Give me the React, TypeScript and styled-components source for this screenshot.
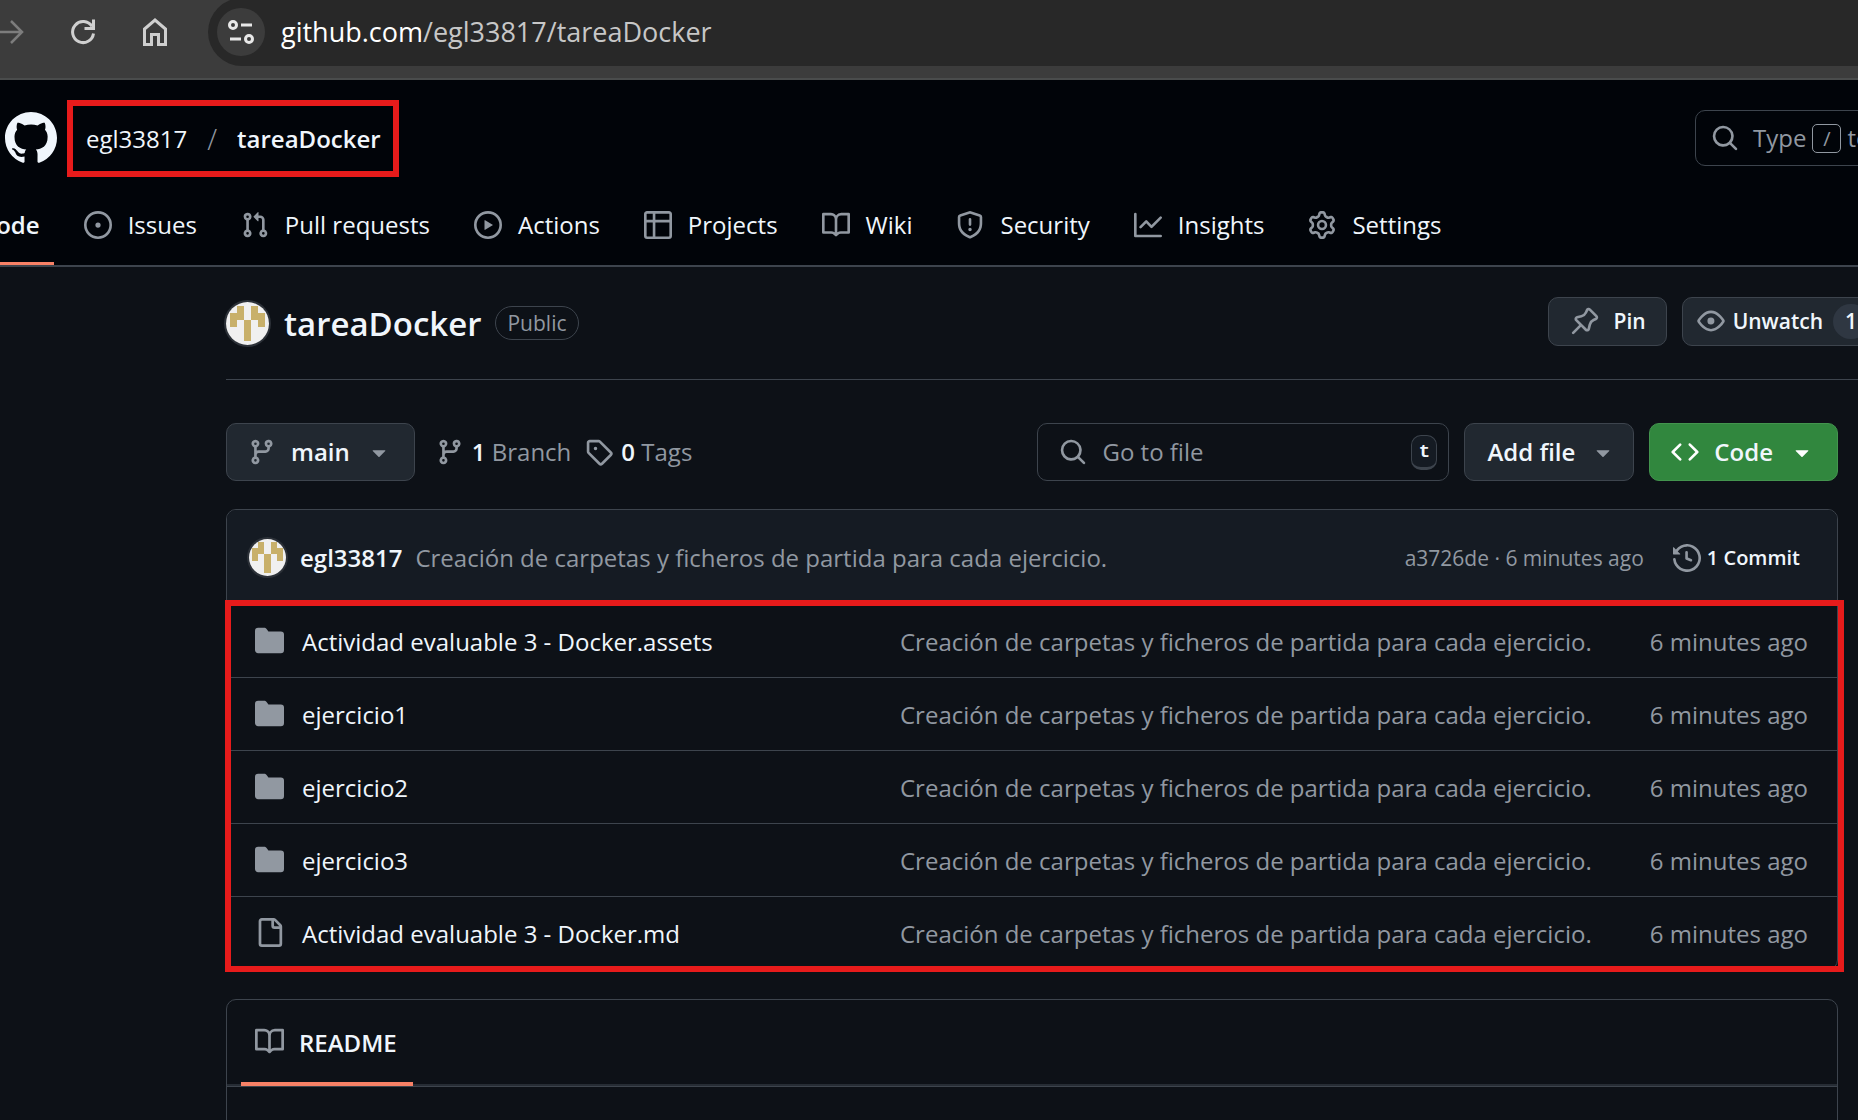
import React from "react";
import styled, { createGlobalStyle } from "styled-components";

const c = {
  canvas: "#0d1117",
  header: "#010409",
  subtle: "#151b23",
  button: "#212830",
  border: "#3d444d",
  text: "#f0f6fc",
  muted: "#9198a1",
  accent: "#f78166",
  mark: "#e71b1b",
};

const GlobalStyle = createGlobalStyle`
  *, *::before, *::after { box-sizing: border-box; }
  html, body { margin: 0; background: ${c.canvas}; }
  body, button, input {
    font-family: "Segoe UI", "Open Sans", "Noto Sans", sans-serif;
    font-size: 24px;
    line-height: 32px;
    color: ${c.text};
  }
  a { color: inherit; text-decoration: none; }
  svg { display: block; flex: none; }
`;

const paths = {
  github:
    "M8 0c4.42 0 8 3.58 8 8a8.013 8.013 0 0 1-5.45 7.59c-.4.08-.55-.17-.55-.38 0-.27.01-1.13.01-2.2 0-.75-.25-1.23-.54-1.48 1.78-.2 3.65-.88 3.65-3.95 0-.88-.31-1.59-.82-2.15.08-.2.36-1.02-.08-2.12 0 0-.67-.22-2.2.82-.64-.18-1.32-.27-2-.27-.68 0-1.36.09-2 .27-1.53-1.03-2.2-.82-2.2-.82-.44 1.1-.16 1.92-.08 2.12-.51.56-.82 1.28-.82 2.15 0 3.06 1.86 3.75 3.64 3.95-.23.2-.44.55-.51 1.07-.46.21-1.61.55-2.33-.66-.15-.24-.6-.83-1.23-.82-.67.01-.27.38.01.53.34.19.73.9.82 1.13.16.45.68 1.31 2.69.94 0 .67.01 1.3.01 1.49 0 .21-.15.45-.55.38A7.995 7.995 0 0 1 0 8c0-4.42 3.58-8 8-8Z",
  issue:
    "M8 9.5a1.5 1.5 0 1 0 0-3 1.5 1.5 0 0 0 0 3ZM8 0a8 8 0 1 1 0 16A8 8 0 0 1 8 0ZM1.5 8a6.5 6.5 0 1 0 13 0 6.5 6.5 0 0 0-13 0Z",
  pull:
    "M1.5 3.25a2.25 2.25 0 1 1 3 2.122v5.256a2.251 2.251 0 1 1-1.5 0V5.372A2.25 2.25 0 0 1 1.5 3.25Zm5.677-.177L9.573.677A.25.25 0 0 1 10 .854V2.5h1A2.5 2.5 0 0 1 13.5 5v5.628a2.251 2.251 0 1 1-1.5 0V5a1 1 0 0 0-1-1h-1v1.646a.25.25 0 0 1-.427.177L7.177 3.427a.25.25 0 0 1 0-.354ZM3.75 2.5a.75.75 0 1 0 0 1.5.75.75 0 0 0 0-1.5Zm0 9.5a.75.75 0 1 0 0 1.5.75.75 0 0 0 0-1.5Zm8.25.75a.75.75 0 1 0 1.5 0 .75.75 0 0 0-1.5 0Z",
  play:
    "M8 0a8 8 0 1 1 0 16A8 8 0 0 1 8 0ZM1.5 8a6.5 6.5 0 1 0 13 0 6.5 6.5 0 0 0-13 0Zm4.879-2.773 4.264 2.559a.25.25 0 0 1 0 .428l-4.264 2.559A.25.25 0 0 1 6 10.559V5.442a.25.25 0 0 1 .379-.215Z",
  table:
    "M0 1.75C0 .784.784 0 1.75 0h12.5C15.216 0 16 .784 16 1.75v12.5A1.75 1.75 0 0 1 14.25 16H1.75A1.75 1.75 0 0 1 0 14.25ZM6.5 6.5v8h7.75a.25.25 0 0 0 .25-.25V6.5Zm8-1.5V1.75a.25.25 0 0 0-.25-.25H6.5V5Zm-13 1.5v7.75c0 .138.112.25.25.25H5v-8ZM5 5V1.5H1.75a.25.25 0 0 0-.25.25V5Z",
  book:
    "M0 1.75A.75.75 0 0 1 .75 1h4.253c1.227 0 2.317.59 3 1.501A3.743 3.743 0 0 1 11.006 1h4.245a.75.75 0 0 1 .75.75v10.5a.75.75 0 0 1-.75.75h-4.507a2.25 2.25 0 0 0-1.591.659l-.622.621a.75.75 0 0 1-1.06 0l-.622-.621A2.25 2.25 0 0 0 5.258 13H.75a.75.75 0 0 1-.75-.75Zm7.251 10.324.004-5.073-.002-2.253A2.25 2.25 0 0 0 5.003 2.5H1.5v9h3.757a3.75 3.75 0 0 1 1.994.574ZM8.755 4.75l-.004 7.322a3.752 3.752 0 0 1 1.992-.572H14.5v-9h-3.495a2.25 2.25 0 0 0-2.25 2.25Z",
  shield:
    "M7.467.133a1.748 1.748 0 0 1 1.066 0l5.25 1.68A1.75 1.75 0 0 1 15 3.48V7c0 1.566-.32 3.182-1.303 4.682-.983 1.498-2.585 2.813-5.032 3.855a1.697 1.697 0 0 1-1.33 0c-2.447-1.042-4.049-2.357-5.032-3.855C1.32 10.182 1 8.566 1 7V3.48a1.75 1.75 0 0 1 1.217-1.667Zm.61 1.429a.25.25 0 0 0-.153 0l-5.25 1.68a.25.25 0 0 0-.174.238V7c0 1.358.275 2.666 1.057 3.86.784 1.194 2.121 2.34 4.366 3.297a.196.196 0 0 0 .154 0c2.245-.956 3.582-2.104 4.366-3.298C13.225 9.666 13.5 8.36 13.5 7V3.48a.251.251 0 0 0-.174-.237l-5.25-1.68ZM8.75 4.75v3a.75.75 0 0 1-1.5 0v-3a.75.75 0 0 1 1.5 0ZM9 10.5a1 1 0 1 1-2 0 1 1 0 0 1 2 0Z",
  graph:
    "M1.5 1.75V13.5h13.75a.75.75 0 0 1 0 1.5H.75a.75.75 0 0 1-.75-.75V1.75a.75.75 0 0 1 1.5 0Zm14.28 2.53-5.25 5.25a.75.75 0 0 1-1.06 0L7 7.06 4.28 9.78a.751.751 0 0 1-1.042-.018.751.751 0 0 1-.018-1.042l3.25-3.25a.75.75 0 0 1 1.06 0L10 7.94l4.72-4.72a.751.751 0 0 1 1.042.018.751.751 0 0 1 .018 1.042Z",
  gear:
    "M8 0a8.2 8.2 0 0 1 .701.031C9.444.095 9.99.645 10.16 1.29l.288 1.107c.018.066.079.158.212.224.231.114.454.243.668.386.123.082.233.09.299.071l1.103-.303c.644-.176 1.392.021 1.82.63.27.385.506.792.704 1.218.315.675.111 1.422-.364 1.891l-.814.806c-.049.048-.098.147-.088.294.016.257.016.515 0 .772-.01.147.038.246.088.294l.814.806c.475.469.679 1.216.364 1.891a7.977 7.977 0 0 1-.704 1.217c-.428.61-1.176.807-1.82.63l-1.102-.302c-.067-.019-.177-.011-.3.071a5.909 5.909 0 0 1-.668.386c-.133.066-.194.158-.211.224l-.29 1.106c-.168.646-.715 1.196-1.458 1.26a8.006 8.006 0 0 1-1.402 0c-.743-.064-1.289-.614-1.458-1.26l-.289-1.106c-.018-.066-.079-.158-.212-.224a5.738 5.738 0 0 1-.668-.386c-.123-.082-.233-.09-.299-.071l-1.103.303c-.644.176-1.392-.021-1.82-.63a8.12 8.12 0 0 1-.704-1.218c-.315-.675-.111-1.422.363-1.891l.815-.806c.05-.048.098-.147.088-.294a6.214 6.214 0 0 1 0-.772c.01-.147-.038-.246-.088-.294l-.815-.806C.635 6.045.431 5.298.746 4.623a7.92 7.92 0 0 1 .704-1.217c.428-.61 1.176-.807 1.82-.63l1.102.302c.067.019.177.011.3-.071.214-.143.437-.272.668-.386.133-.066.194-.158.211-.224l.29-1.106C6.009.645 6.556.095 7.299.03 7.53.01 7.764 0 8 0Zm-.571 1.525c-.036.003-.108.036-.137.146l-.289 1.105c-.147.561-.549.967-.998 1.189-.173.086-.34.183-.5.29-.417.278-.97.423-1.529.27l-1.103-.303c-.109-.03-.175.016-.195.045-.22.312-.412.644-.573.99-.014.031-.021.11.059.19l.815.806c.411.406.562.957.53 1.456a4.709 4.709 0 0 0 0 .582c.032.499-.119 1.05-.53 1.456l-.815.806c-.081.08-.073.159-.059.19.162.346.353.677.573.989.02.03.085.076.195.046l1.102-.303c.56-.153 1.113-.008 1.53.27.161.107.328.204.501.29.447.222.85.629.997 1.189l.289 1.105c.029.109.101.143.137.146a6.6 6.6 0 0 0 1.142 0c.036-.003.108-.036.137-.146l.289-1.105c.147-.561.549-.967.998-1.189.173-.086.34-.183.5-.29.417-.278.97-.423 1.529-.27l1.103.303c.109.029.175-.016.195-.045.22-.313.411-.644.573-.99.014-.031.021-.11-.059-.19l-.815-.806c-.411-.406-.562-.957-.53-1.456a4.709 4.709 0 0 0 0-.582c-.032-.499.119-1.05.53-1.456l.815-.806c.081-.08.073-.159.059-.19a6.464 6.464 0 0 0-.573-.989c-.02-.03-.085-.076-.195-.046l-1.102.303c-.56.153-1.113.008-1.53-.27a4.44 4.44 0 0 0-.501-.29c-.447-.222-.85-.629-.997-1.189l-.289-1.105c-.029-.11-.101-.143-.137-.146a6.6 6.6 0 0 0-1.142 0ZM11 8a3 3 0 1 1-6 0 3 3 0 0 1 6 0ZM9.5 8a1.5 1.5 0 1 0-3.001.001A1.5 1.5 0 0 0 9.5 8Z",
  branch:
    "M9.5 3.25a2.25 2.25 0 1 1 3 2.122V6A2.5 2.5 0 0 1 10 8.5H6a1 1 0 0 0-1 1v1.128a2.251 2.251 0 1 1-1.5 0V5.372a2.25 2.25 0 1 1 1.5 0v1.836A2.493 2.493 0 0 1 6 7h4a1 1 0 0 0 1-1v-.628A2.25 2.25 0 0 1 9.5 3.25Zm-6 0a.75.75 0 1 0 1.5 0 .75.75 0 0 0-1.5 0Zm8.25-.75a.75.75 0 1 0 0 1.5.75.75 0 0 0 0-1.5ZM4.25 12a.75.75 0 1 0 0 1.5.75.75 0 0 0 0-1.5Z",
  tag:
    "M1 7.775V2.75C1 1.784 1.784 1 2.75 1h5.025c.464 0 .91.184 1.238.513l6.25 6.25a1.75 1.75 0 0 1 0 2.474l-5.026 5.026a1.75 1.75 0 0 1-2.474 0l-6.25-6.25A1.752 1.752 0 0 1 1 7.775Zm1.5 0c0 .066.026.13.073.177l6.25 6.25a.25.25 0 0 0 .354 0l5.025-5.025a.25.25 0 0 0 0-.354l-6.25-6.25a.25.25 0 0 0-.177-.073H2.75a.25.25 0 0 0-.25.25ZM6 5a1 1 0 1 1 0 2 1 1 0 0 1 0-2Z",
  search:
    "M10.68 11.74a6 6 0 0 1-7.922-8.982 6 6 0 0 1 8.982 7.922l3.04 3.04a.749.749 0 0 1-.326 1.275.749.749 0 0 1-.734-.215ZM11.5 7a4.499 4.499 0 1 0-8.997 0A4.499 4.499 0 0 0 11.5 7Z",
  code:
    "m11.28 3.22 4.25 4.25a.75.75 0 0 1 0 1.06l-4.25 4.25a.749.749 0 0 1-1.275-.326.749.749 0 0 1 .215-.734L13.94 8l-3.72-3.72a.749.749 0 0 1 .326-1.275.749.749 0 0 1 .734.215Zm-6.56 0a.751.751 0 0 1 1.042.018.751.751 0 0 1 .018 1.042L2.06 8l3.72 3.72a.749.749 0 0 1-.326 1.275.749.749 0 0 1-.734-.215L.47 8.53a.75.75 0 0 1 0-1.06Z",
  caret:
    "m4.427 7.427 3.396 3.396a.25.25 0 0 0 .354 0l3.396-3.396A.25.25 0 0 0 11.396 7H4.604a.25.25 0 0 0-.177.427Z",
  history:
    "m.427 1.927 1.215 1.215a8.002 8.002 0 1 1-1.6 5.685.75.75 0 1 1 1.493-.154 6.5 6.5 0 1 0 1.18-4.458l1.358 1.358A.25.25 0 0 1 3.896 6H.25A.25.25 0 0 1 0 5.75V2.104a.25.25 0 0 1 .427-.177ZM7.75 4a.75.75 0 0 1 .75.75v2.992l2.028.812a.75.75 0 0 1-.557 1.392l-2.5-1A.751.751 0 0 1 7 8.25v-3.5A.75.75 0 0 1 7.75 4Z",
  folder:
    "M1.75 1A1.75 1.75 0 0 0 0 2.75v10.5C0 14.216.784 15 1.75 15h12.5A1.75 1.75 0 0 0 16 13.25v-8.5A1.75 1.75 0 0 0 14.25 3H7.5a.25.25 0 0 1-.2-.1l-.9-1.2C6.07 1.26 5.55 1 5 1H1.75Z",
  file:
    "M2 1.75C2 .784 2.784 0 3.75 0h6.586c.464 0 .909.184 1.237.513l2.914 2.914c.329.328.513.773.513 1.237v9.586A1.75 1.75 0 0 1 13.25 16h-9.5A1.75 1.75 0 0 1 2 14.25Zm1.75-.25a.25.25 0 0 0-.25.25v12.5c0 .138.112.25.25.25h9.5a.25.25 0 0 0 .25-.25V6h-2.75A1.75 1.75 0 0 1 9 4.25V1.5Zm6.75.062V4.25c0 .138.112.25.25.25h2.688l-.011-.013-2.914-2.914-.013-.011Z",
  eye:
    "M8 2c1.981 0 3.671.992 4.933 2.078 1.27 1.091 2.187 2.345 2.637 3.023a1.62 1.62 0 0 1 0 1.798c-.45.678-1.367 1.932-2.637 3.023C11.67 13.008 9.981 14 8 14c-1.981 0-3.671-.992-4.933-2.078C1.797 10.83.88 9.576.43 8.898a1.62 1.62 0 0 1 0-1.798c.45-.677 1.367-1.931 2.637-3.022C4.33 2.992 6.019 2 8 2ZM1.679 7.932a.12.12 0 0 0 0 .136c.411.622 1.241 1.75 2.366 2.717C5.176 11.758 6.527 12.5 8 12.5c1.473 0 2.825-.742 3.955-1.715 1.124-.967 1.954-2.096 2.366-2.717a.12.12 0 0 0 0-.136c-.412-.621-1.242-1.75-2.366-2.717C10.824 4.242 9.473 3.5 8 3.5c-1.473 0-2.825.742-3.955 1.715-1.124.967-1.954 2.096-2.366 2.717ZM8 10a2 2 0 1 1-.001-3.999A2 2 0 0 1 8 10Z",
  pin:
    "m11.294.984 3.722 3.722a1.75 1.75 0 0 1-.504 2.826l-1.327.613a3.089 3.089 0 0 0-1.707 2.084l-.584 2.454c-.317 1.332-1.972 1.8-2.94.832L5.75 11.311 1.78 15.28a.749.749 0 1 1-1.06-1.06l3.969-3.97-2.204-2.204c-.968-.968-.5-2.623.832-2.94l2.454-.584a3.08 3.08 0 0 0 2.084-1.707l.613-1.327a1.75 1.75 0 0 1 2.826-.504ZM6.283 9.723l2.732 2.731a.25.25 0 0 0 .42-.119l.584-2.454a4.586 4.586 0 0 1 2.537-3.098l1.328-.613a.25.25 0 0 0 .072-.404l-3.722-3.722a.25.25 0 0 0-.404.072l-.613 1.328a4.584 4.584 0 0 1-3.098 2.537l-2.454.584a.25.25 0 0 0-.119.42l2.731 2.732Z",
};

type IconName = keyof typeof paths;

function Icon({ name, size = 28, color = c.muted }: { name: IconName; size?: number; color?: string }) {
  return (
    <svg width={size} height={size} viewBox="0 0 16 16" fill={color} fillRule="evenodd" aria-hidden="true">
      <path d={paths[name]} />
    </svg>
  );
}

function Avatar({ size }: { size: number }) {
  return (
    <AvatarFrame $size={size}>
      <svg width={size} height={size} viewBox="0 0 12 12" shapeRendering="crispEdges" aria-hidden="true">
        <rect width="12" height="12" fill="#f0f0f0" />
        <path d="M3 1h2v4H3v2H1V3h2ZM7 1h2v2h2v4H9V5H7ZM5 5h2v6H5Z" fill="#c8b06a" />
      </svg>
    </AvatarFrame>
  );
}

const AvatarFrame = styled.span<{ $size: number }>`
  flex: none;
  width: ${(p) => p.$size}px;
  height: ${(p) => p.$size}px;
  border-radius: 50%;
  overflow: hidden;
  box-shadow: 0 0 0 2px #2c3138;
`;

const Page = styled.div`
  height: 100vh;
  overflow: hidden;
`;

/* Browser bar */
const BrowserBar = styled.div`
  display: flex;
  height: 80px;
  background: #3c3c3c;
  border-bottom: 2px solid #4a4c4c;
  overflow: hidden;
`;

const BrowserButtons = styled.div`
  display: flex;
  align-items: center;
  gap: 40px;
  height: 64px;
  margin-left: -5px;
  padding-right: 37px;
`;

const BrowserButton = styled.button`
  display: flex;
  padding: 0;
  border: 0;
  background: none;
`;

const AddressBar = styled.label`
  flex: 1;
  display: flex;
  align-items: center;
  gap: 16px;
  height: 68px;
  margin-top: -2px;
  padding-left: 9px;
  border-radius: 34px 0 0 34px;
  background: #282828;
`;

const SiteInfo = styled.span`
  display: grid;
  place-items: center;
  width: 48px;
  height: 48px;
  border-radius: 50%;
  background: #3c3c3c;
`;

const Url = styled.span`
  font-size: 27px;
  color: #c7c7c7;
  b { font-weight: 400; color: #ffffff; }
`;

/* Repository header */
const SiteHeader = styled.header`
  background: ${c.header};
  border-bottom: 2px solid ${c.border};
`;

const TopRow = styled.div`
  display: flex;
  align-items: center;
  height: 116px;
  padding-left: 5px;
`;

const Breadcrumb = styled.nav`
  display: flex;
  align-items: center;
  gap: 20px;
  height: 77px;
  margin-left: 10px;
  padding: 2px 12px 0 13px;
  border: 6px solid ${c.mark};
  span { font-size: 29px; font-weight: 300; color: ${c.muted}; }
  a:last-child { font-weight: 600; }
`;

const GlobalSearch = styled.button`
  display: flex;
  align-items: center;
  gap: 6px;
  flex: none;
  width: 420px;
  height: 56px;
  margin: 0 -257px 0 auto;
  padding: 0 15px;
  border: 1px solid ${c.border};
  border-radius: 10px;
  background: transparent;
  color: ${c.muted};
  white-space: nowrap;
  svg { margin-right: 8px; }
`;

const SlashKey = styled.kbd`
  width: 29px;
  height: 29px;
  border: 1px solid ${c.muted};
  border-radius: 5px;
  font: inherit;
  font-size: 20px;
  line-height: 27px;
  text-align: center;
`;

const Tabs = styled.nav`
  display: flex;
  gap: 44px;
  margin-left: -63px;
`;

const Tab = styled.a<{ $active?: boolean }>`
  position: relative;
  display: flex;
  align-items: center;
  gap: 16px;
  flex: none;
  height: 69px;
  padding-bottom: 12px;
  font-weight: ${(p) => (p.$active ? 600 : 400)};
  ${(p) =>
    p.$active &&
    `&::after {
      content: "";
      position: absolute;
      left: -14px;
      right: -14px;
      bottom: 0;
      height: 3px;
      background: ${c.accent};
    }`}
`;

/* Page content */
const Main = styled.main`
  padding: 0 20px 0 226px;
`;

const TitleRow = styled.div`
  display: flex;
  align-items: center;
  height: 113px;
  margin-right: -20px;
  border-bottom: 1px solid ${c.border};
`;

const Title = styled.h1`
  margin: 0 14px 0 15px;
  padding-top: 2px;
  font-size: 33px;
  line-height: 48px;
  font-weight: 600;
`;

const Badge = styled.span`
  padding: 0 11px;
  border: 1px solid ${c.border};
  border-radius: 17px;
  font-size: 21px;
  color: ${c.muted};
`;

const TitleActions = styled.div`
  display: flex;
  gap: 15px;
  margin: 0 -62px 0 auto;
  padding-bottom: 4px;
`;

const Button = styled.button<{ $tone?: "primary"; $small?: boolean }>`
  display: flex;
  align-items: center;
  flex: none;
  gap: ${(p) => (p.$small ? 8 : 15)}px;
  height: ${(p) => (p.$small ? 49 : 58)}px;
  padding: 0 ${(p) => (p.$small ? 14 : 21)}px;
  border: 1px solid ${(p) => (p.$tone ? "#43944e" : c.border)};
  border-radius: 10px;
  background: ${(p) => (p.$tone ? "#31873e" : c.button)};
  font-size: ${(p) => (p.$small ? 21 : 24)}px;
  font-weight: 600;
  white-space: nowrap;
`;

const PinButton = styled(Button)`
  gap: 15px;
  padding: 0 20px 0 22px;
`;

const AddFileButton = styled(Button)`
  gap: 14px;
  padding: 0 16px 0 22px;
`;

const Counter = styled.span`
  height: 35px;
  margin-left: 2px;
  padding: 0 12px;
  border-radius: 18px;
  background: #2f3742;
  line-height: 35px;
`;

const Toolbar = styled.div`
  display: flex;
  align-items: center;
  gap: 15px;
  margin-top: 43px;
`;

const RefLinks = styled.div`
  display: flex;
  gap: 14px;
  margin: 0 auto 0 6px;
`;

const RefLink = styled.a`
  display: flex;
  align-items: center;
  gap: 8px;
  color: ${c.muted};
  b { font-weight: 600; color: ${c.text}; }
`;

const FileSearch = styled.label`
  display: flex;
  align-items: center;
  gap: 15px;
  width: 412px;
  height: 58px;
  padding: 0 11px 0 21px;
  border: 1px solid ${c.border};
  border-radius: 10px;
`;

const FileInput = styled.input`
  flex: 1;
  min-width: 0;
  padding: 0;
  border: 0;
  outline: 0;
  background: transparent;
  &::placeholder { color: ${c.muted}; opacity: 1; }
`;

const KeyHint = styled.kbd`
  width: 26px;
  height: 35px;
  border: 1px solid ${c.border};
  border-bottom-width: 3px;
  border-radius: 10px;
  background: ${c.subtle};
  font-family: "Liberation Mono", monospace;
  font-size: 19px;
  font-weight: 700;
  line-height: 33px;
  text-align: center;
`;

const Card = styled.section`
  border: 1px solid ${c.border};
  border-radius: 10px;
`;

const FilesCard = styled(Card)`
  margin-top: 28px;
`;

const CommitBar = styled.div`
  display: flex;
  align-items: center;
  height: 95px;
  padding: 0 37px 0 22px;
  border-radius: 9px 9px 0 0;
  background: ${c.subtle};
`;

const Author = styled.a`
  margin: 0 13px 0 14px;
  font-weight: 600;
`;

const CommitMessage = styled.a`
  color: ${c.muted};
`;

const CommitMeta = styled.span`
  margin: 0 29px 0 auto;
  font-size: 21px;
  color: ${c.muted};
`;

const CommitCount = styled.a`
  display: flex;
  align-items: center;
  gap: 6px;
  font-size: 20px;
  font-weight: 600;
`;

const FileArea = styled.div`
  position: relative;
`;

const Highlight = styled.div`
  position: absolute;
  inset: -5px -7px -3px -2px;
  border: 6px solid ${c.mark};
  pointer-events: none;
`;

const FileTable = styled.table`
  width: 100%;
  table-layout: fixed;
  border-collapse: separate;
  border-spacing: 0;
`;

const FileRow = styled.tr`
  td {
    height: 73px;
    padding: 2px 0 0;
    border-bottom: 1px solid ${c.border};
    color: ${c.muted};
    white-space: nowrap;
  }
  &:last-child td { height: 72px; border-bottom: 0; }
  td:first-child { width: 673px; padding: 0 0 0 28px; color: ${c.text}; }
  td:last-child { width: 220px; padding-right: 29px; text-align: right; }
`;

const FileName = styled.a`
  display: inline-flex;
  align-items: center;
  gap: 18px;
  vertical-align: middle;
  svg { margin-bottom: 4px; }
`;

const ReadmeCard = styled(Card)`
  height: 400px;
  margin-top: 29px;
`;

const ReadmeTabs = styled.div`
  height: 87px;
  padding-left: 14px;
  border-bottom: 1px solid ${c.border};
  box-shadow: inset 0 -2px 0 #262c34;
`;

const ReadmeTab = styled.a`
  display: inline-flex;
  align-items: center;
  gap: 15px;
  height: 86px;
  padding: 4px 16px 0 14px;
  border-bottom: 4px solid ${c.accent};
  font-weight: 600;
  svg { margin-bottom: 3px; }
`;

const tabs: { icon: IconName; label: string; active?: boolean }[] = [
  { icon: "code", label: "Code", active: true },
  { icon: "issue", label: "Issues" },
  { icon: "pull", label: "Pull requests" },
  { icon: "play", label: "Actions" },
  { icon: "table", label: "Projects" },
  { icon: "book", label: "Wiki" },
  { icon: "shield", label: "Security" },
  { icon: "graph", label: "Insights" },
  { icon: "gear", label: "Settings" },
];

const message = "Creación de carpetas y ficheros de partida para cada ejercicio.";

const files: { icon: IconName; name: string }[] = [
  { icon: "folder", name: "Actividad evaluable 3 - Docker.assets" },
  { icon: "folder", name: "ejercicio1" },
  { icon: "folder", name: "ejercicio2" },
  { icon: "folder", name: "ejercicio3" },
  { icon: "file", name: "Actividad evaluable 3 - Docker.md" },
];

export default function App() {
  return (
    <>
      <GlobalStyle />
      <Page>
        <BrowserBar>
          <BrowserButtons>
            <BrowserButton aria-label="Forward">
              <svg width="32" height="32" viewBox="0 0 32 32" fill="none" stroke="#7d7d7d" strokeWidth="2.5">
                <path d="M0 16h27M16 5l11 11-11 11" />
              </svg>
            </BrowserButton>
            <BrowserButton aria-label="Reload">
              <svg width="32" height="32" viewBox="0 0 32 32" fill="none" stroke="#cfcfcf" strokeWidth="3">
                <path d="M26.5 17.5A10.5 10.5 0 1 1 25 10.5M26.5 3.5v9h-9" />
              </svg>
            </BrowserButton>
            <BrowserButton aria-label="Home">
              <svg width="32" height="32" viewBox="0 0 32 32" fill="none" stroke="#cfcfcf" strokeWidth="3">
                <path d="M5.5 28.5V13L16 4l10.5 9v15.5h-7v-10h-7v10Z" />
              </svg>
            </BrowserButton>
          </BrowserButtons>
          <AddressBar>
            <SiteInfo>
              <svg width="28" height="28" viewBox="0 0 28 28" fill="none" stroke="#e8e8e8" strokeWidth="3">
                <circle cx="6" cy="7" r="3.5" />
                <path d="M14 7h11M3 21h11" />
                <circle cx="22" cy="21" r="3.5" />
              </svg>
            </SiteInfo>
            <Url>
              <b>github.com</b>/egl33817/tareaDocker
            </Url>
          </AddressBar>
        </BrowserBar>

        <SiteHeader>
          <TopRow>
            <a href="#home" aria-label="GitHub">
              <Icon name="github" size={52} color={c.text} />
            </a>
            <Breadcrumb aria-label="Breadcrumb">
              <a href="#owner">egl33817</a>
              <span>/</span>
              <a href="#repo">tareaDocker</a>
            </Breadcrumb>
            <GlobalSearch>
              <Icon name="search" />
              Type <SlashKey>/</SlashKey> to search
            </GlobalSearch>
          </TopRow>
          <Tabs aria-label="Repository">
            {tabs.map((t) => (
              <Tab key={t.label} href={`#${t.icon}`} $active={t.active}>
                <Icon name={t.icon} />
                {t.label}
              </Tab>
            ))}
          </Tabs>
        </SiteHeader>

        <Main>
          <TitleRow>
            <Avatar size={43} />
            <Title>tareaDocker</Title>
            <Badge>Public</Badge>
            <TitleActions>
              <PinButton $small>
                <Icon name="pin" />
                Pin
              </PinButton>
              <Button $small>
                <Icon name="eye" />
                Unwatch
                <Counter>1</Counter>
                <Icon name="caret" />
              </Button>
            </TitleActions>
          </TitleRow>

          <Toolbar>
            <Button>
              <Icon name="branch" />
              main
              <Icon name="caret" />
            </Button>
            <RefLinks>
              <RefLink href="#branches">
                <Icon name="branch" />
                <span>
                  <b>1</b> Branch
                </span>
              </RefLink>
              <RefLink href="#tags">
                <Icon name="tag" />
                <span>
                  <b>0</b> Tags
                </span>
              </RefLink>
            </RefLinks>
            <FileSearch>
              <Icon name="search" />
              <FileInput type="text" placeholder="Go to file" aria-label="Go to file" />
              <KeyHint>t</KeyHint>
            </FileSearch>
            <AddFileButton>
              Add file
              <Icon name="caret" />
            </AddFileButton>
            <Button $tone="primary">
              <Icon name="code" color="#ffffff" />
              Code
              <Icon name="caret" color="#ffffff" />
            </Button>
          </Toolbar>

          <FilesCard>
            <CommitBar>
              <Avatar size={37} />
              <Author href="#author">egl33817</Author>
              <CommitMessage href="#commit">{message}</CommitMessage>
              <CommitMeta>a3726de · 6 minutes ago</CommitMeta>
              <CommitCount href="#commits">
                <Icon name="history" />1 Commit
              </CommitCount>
            </CommitBar>
            <FileArea>
              <FileTable>
                <tbody>
                  {files.map((f) => (
                    <FileRow key={f.name}>
                      <td>
                        <FileName href="#file">
                          <Icon name={f.icon} size={29} />
                          {f.name}
                        </FileName>
                      </td>
                      <td>{message}</td>
                      <td>6 minutes ago</td>
                    </FileRow>
                  ))}
                </tbody>
              </FileTable>
              <Highlight />
            </FileArea>
          </FilesCard>

          <ReadmeCard>
            <ReadmeTabs>
              <ReadmeTab href="#readme">
                <Icon name="book" size={29} />
                README
              </ReadmeTab>
            </ReadmeTabs>
          </ReadmeCard>
        </Main>
      </Page>
    </>
  );
}
